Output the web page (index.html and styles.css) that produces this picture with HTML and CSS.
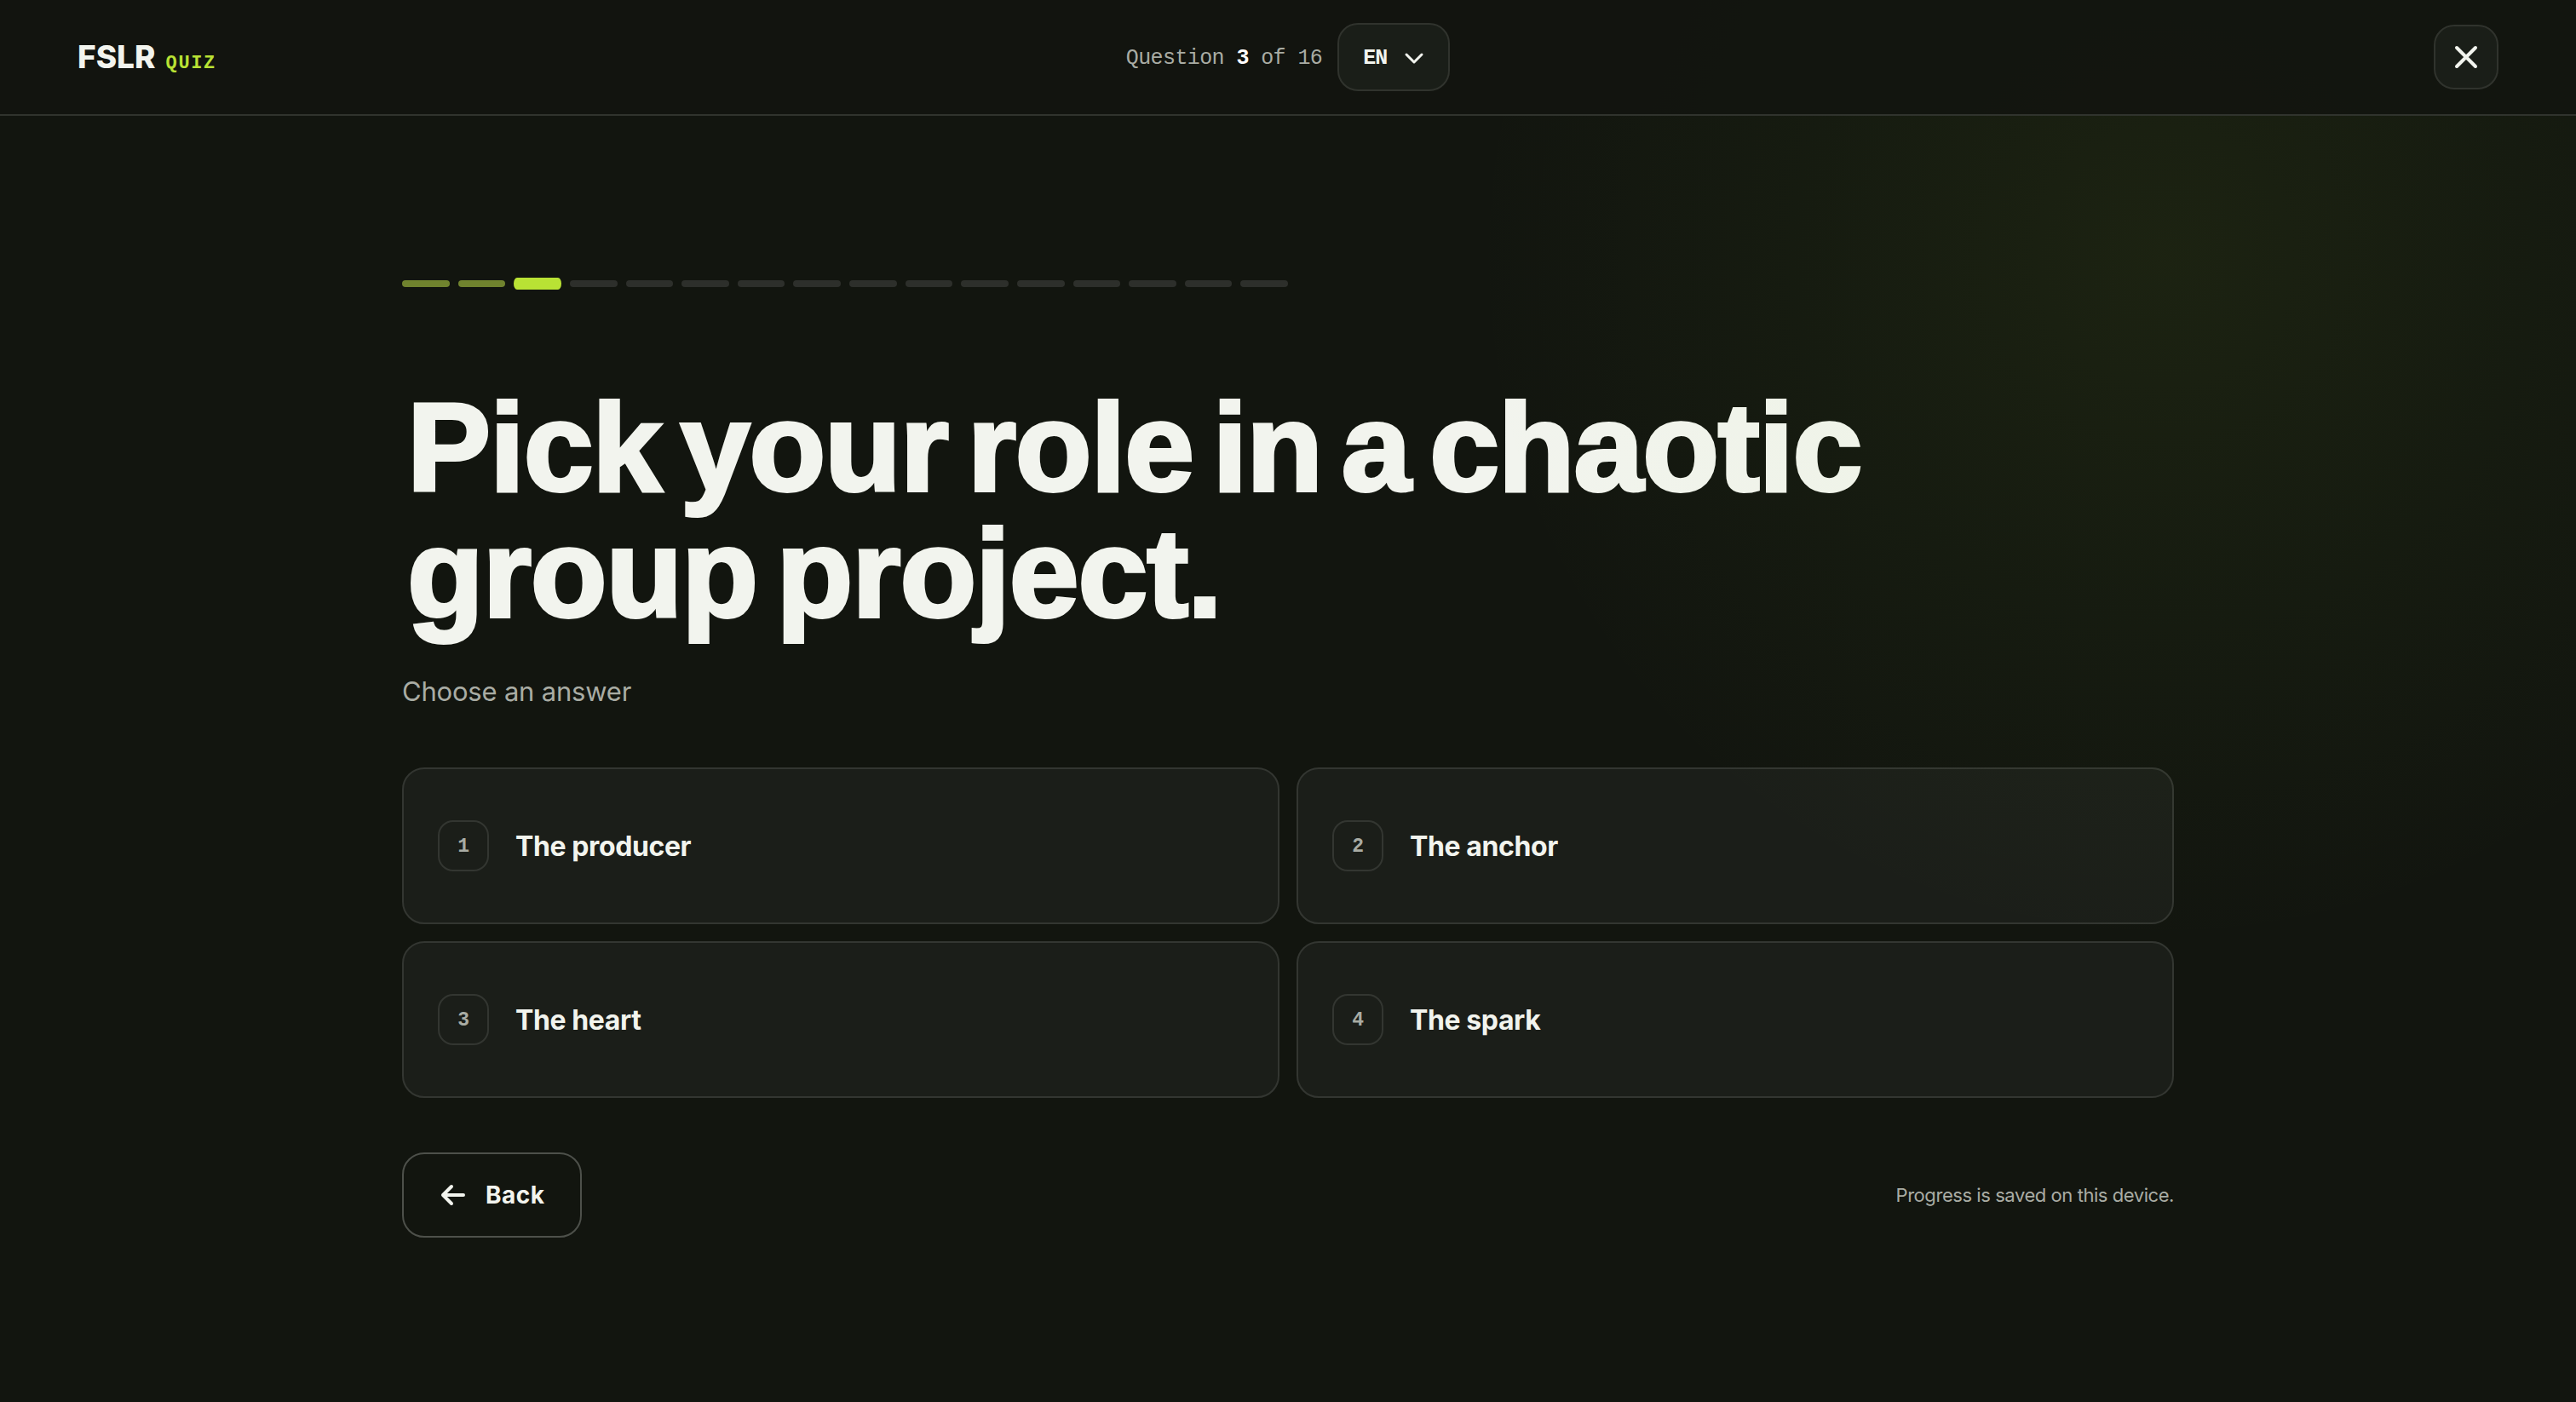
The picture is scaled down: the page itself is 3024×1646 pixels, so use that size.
FILE: index.html
```
<!DOCTYPE html>
<html lang="en">
  <head>
    <meta charset="UTF-8" />
    <title>FSLR Quiz</title>
    <link rel="stylesheet" href="styles.css">
  </head>
  <body>
    <header class="topbar">
      <a class="logo">FSLR <span class="logo-tag">QUIZ</span></a>

      <div class="status">
        <p class="counter">Question <strong>3</strong> of 16</p>
        <button class="lang">
          EN
          <svg width="24" height="24" viewBox="0 0 24 24">
            <path d="M3 8l9 9L21 8" />
          </svg>
        </button>
      </div>

      <button class="close" aria-label="Close">
        <svg width="30" height="30" viewBox="0 0 30 30">
          <path d="M4 4l22 22M26 4L4 26" />
        </svg>
      </button>
    </header>

    <main class="quiz">
      <div class="progress">
        <span class="done"></span>
        <span class="done"></span>
        <span class="current"></span>
        <span></span>
        <span></span>
        <span></span>
        <span></span>
        <span></span>
        <span></span>
        <span></span>
        <span></span>
        <span></span>
        <span></span>
        <span></span>
        <span></span>
        <span></span>
      </div>

      <h1>Pick your role in a chaotic<br />group project.</h1>
      <p class="hint">Choose an answer</p>

      <div class="answers">
        <button class="answer"><span class="num">1</span>The producer</button>
        <button class="answer"><span class="num">2</span>The anchor</button>
        <button class="answer"><span class="num">3</span>The heart</button>
        <button class="answer"><span class="num">4</span>The spark</button>
      </div>

      <div class="actions">
        <button class="back">
          <svg width="32" height="32" viewBox="0 0 32 32">
            <path d="M28 16H4M14 6L4 16L14 26" />
          </svg>
          Back
        </button>
        <p class="saved">Progress is saved on this device.</p>
      </div>
    </main>

    <div class="glow"></div>
  </body>
</html>
```
FILE: styles.css
```
:root {
  --bg: #12150f;
  --text: #f2f4ee;
  --muted: #a9aca4;
  --line: #30332d;
  --accent: #b9e234;
  --mono: "Liberation Mono", monospace;
}

* {
  box-sizing: border-box;
  margin: 0;
}

body {
  min-height: 100vh;
  overflow: hidden;
  background: var(--bg);
  color: var(--text);
  font-family: Inter, sans-serif;
}

button {
  padding: 0;
  border: 2px solid var(--line);
  background: none;
  color: inherit;
  font-family: inherit;
}

svg {
  fill: none;
  stroke: currentColor;
  stroke-width: 3;
  stroke-linecap: round;
  stroke-linejoin: round;
}

/* header */
.topbar {
  position: relative;
  z-index: 2;
  display: grid;
  grid-template-columns: 1fr auto 1fr;
  align-items: center;
  height: 136px;
  padding: 0 91px;
  border-bottom: 2px solid var(--line);
  background: rgba(18, 21, 15, 0.92);
}

.logo {
  padding-top: 8px;
  font-size: 37px;
  font-weight: 800;
  line-height: 44px;
  word-spacing: 4px;
}

.logo-tag {
  color: var(--accent);
  font-family: var(--mono);
  font-size: 22px;
  font-weight: 700;
  letter-spacing: 1.6px;
}

.status {
  display: flex;
  align-items: center;
  gap: 18px;
}

.counter {
  padding-top: 2px;
  color: var(--muted);
  font-family: var(--mono);
  font-size: 25px;
  letter-spacing: -0.6px;
}

.counter strong {
  color: #fff;
}

.lang {
  display: flex;
  align-items: center;
  justify-content: space-between;
  width: 132px;
  height: 80px;
  padding: 2px 28px 0;
  border-radius: 24px;
  background: #1a1e18;
  font-family: var(--mono);
  font-size: 25px;
  font-weight: 700;
  letter-spacing: -1px;
}

.close {
  display: grid;
  place-items: center;
  justify-self: end;
  width: 76px;
  height: 76px;
  border-radius: 24px;
  background: #1a1e18;
}

.close svg {
  stroke-width: 4;
}

/* question */
.quiz {
  width: 2080px;
  margin: 0 auto;
  padding-top: 193px;
}

.progress {
  display: flex;
  gap: 10px;
  width: 1040px;
  height: 8px;
}

.progress span {
  flex: 1;
  border-radius: 4px;
  background: #2d2f2b;
}

.progress .done {
  background: #70832e;
}

.progress .current {
  background: var(--accent);
  transform: scaleY(1.75);
}

h1 {
  margin-top: 114px;
  padding-left: 6px;
  font-family: "Liberation Sans", sans-serif;
  font-size: 147px;
  font-weight: 700;
  line-height: 148px;
  letter-spacing: -1.1px;
  word-spacing: -17px;
  white-space: nowrap;
  -webkit-text-stroke: 4px var(--text);
}

.hint {
  margin-top: 41px;
  color: var(--muted);
  font-size: 31px;
  line-height: 48px;
  letter-spacing: -0.2px;
}

.answers {
  display: grid;
  grid-template-columns: 1fr 1fr;
  gap: 20px;
  margin-top: 65px;
}

.answer {
  display: flex;
  align-items: center;
  gap: 31px;
  height: 184px;
  padding: 0 40px;
  border-radius: 26px;
  border-color: #333631;
  background: #1b1e19;
  font-size: 32px;
  font-weight: 650;
  letter-spacing: -0.4px;
}

.num {
  display: grid;
  place-items: center;
  width: 60px;
  height: 60px;
  padding-top: 1px;
  border: 2px solid #333631;
  border-radius: 18px;
  color: var(--muted);
  font-family: var(--mono);
  font-size: 23px;
  font-weight: 700;
}

.actions {
  display: flex;
  align-items: center;
  justify-content: space-between;
  margin-top: 64px;
}

.back {
  display: flex;
  align-items: center;
  gap: 22px;
  width: 211px;
  height: 100px;
  padding-left: 42px;
  border-color: #4d504a;
  border-radius: 26px;
  font-size: 28px;
  font-weight: 700;
  letter-spacing: 0.5px;
}

.back svg {
  stroke-width: 4;
}

.saved {
  color: var(--muted);
  font-size: 22px;
  letter-spacing: -0.44px;
}

/* green light in the corner */
.glow {
  position: absolute;
  inset: 0;
  z-index: 1;
  background: radial-gradient(
    circle 820px at 84% 300px,
    rgba(170, 226, 52, 0.065),
    rgba(150, 226, 52, 0.03) 50%,
    transparent
  );
  pointer-events: none;
}
```
